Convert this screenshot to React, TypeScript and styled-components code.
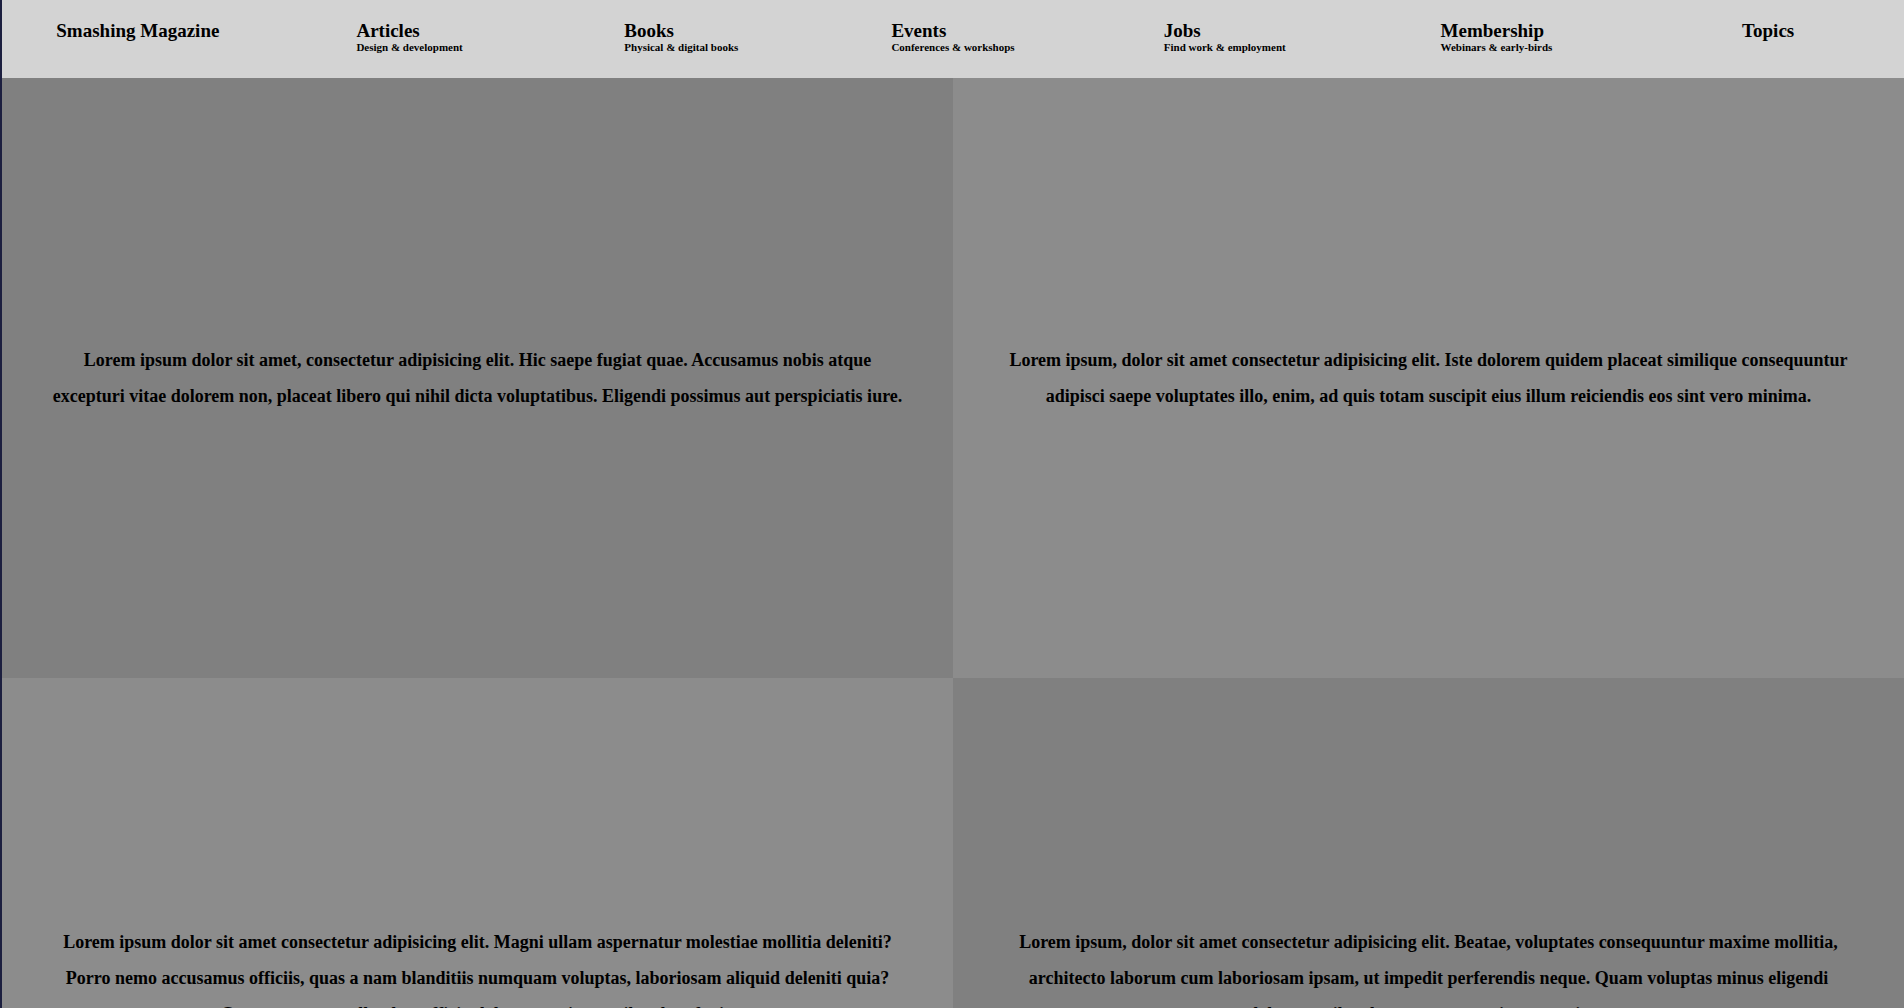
import React from 'react';
import styled, { createGlobalStyle } from 'styled-components';

const GlobalStyle = createGlobalStyle`
  html, body {
    margin: 0;
    padding: 0;
  }
  body {
    background-color: #1c1f3f;
    font-family: "Liberation Serif", "Times New Roman", serif;
    color: #000;
    overflow: hidden;
  }
`;

interface CellProps {
  dark?: boolean;
}

const Page = styled.div`
  margin-left: 2px;
  min-height: 100vh;
`;

const Header = styled.header`
  background-color: #d3d3d3;
  height: 78px;
  box-sizing: border-box;
  padding-top: 20px;
`;

const NavList = styled.ul`
  list-style: none;
  margin: 0;
  padding: 0;
  display: flex;
`;

const NavItem = styled.li`
  flex: 1;
  display: flex;
  justify-content: center;
`;

const NavLink = styled.a`
  display: flex;
  flex-direction: column;
  color: #000;
  text-decoration: none;
  cursor: pointer;
`;

const NavTitle = styled.span`
  font-size: 19px;
  font-weight: bold;
  line-height: 21px;
`;

const NavSub = styled.span`
  font-size: 11px;
  font-weight: bold;
  line-height: 13px;
`;

const Grid = styled.main`
  display: grid;
  grid-template-columns: 1fr 1fr;
  grid-auto-rows: 600px;
`;

const Cell = styled.section<CellProps>`
  background-color: ${({ dark }) => (dark ? '#808080' : '#8c8c8c')};
  display: flex;
  align-items: center;
  justify-content: center;
  padding: 0 50px;
  box-sizing: border-box;
`;

const Text = styled.p`
  margin: 0;
  text-align: center;
  font-weight: bold;
  font-size: 18px;
  line-height: 36px;
`;

const links = [
  { title: 'Smashing Magazine' },
  { title: 'Articles', sub: 'Design & development' },
  { title: 'Books', sub: 'Physical & digital books' },
  { title: 'Events', sub: 'Conferences & workshops' },
  { title: 'Jobs', sub: 'Find work & employment' },
  { title: 'Membership', sub: 'Webinars & early-birds' },
  { title: 'Topics' },
];

const cells = [
  {
    dark: true,
    text: 'Lorem ipsum dolor sit amet, consectetur adipisicing elit. Hic saepe fugiat quae. Accusamus nobis atque excepturi vitae dolorem non, placeat libero qui nihil dicta voluptatibus. Eligendi possimus aut perspiciatis iure.',
  },
  {
    dark: false,
    text: 'Lorem ipsum, dolor sit amet consectetur adipisicing elit. Iste dolorem quidem placeat similique consequuntur adipisci saepe voluptates illo, enim, ad quis totam suscipit eius illum reiciendis eos sint vero minima.',
  },
  {
    dark: false,
    text: 'Lorem ipsum dolor sit amet consectetur adipisicing elit. Magni ullam aspernatur molestiae mollitia deleniti? Porro nemo accusamus officiis, quas a nam blanditiis numquam voluptas, laboriosam aliquid deleniti quia? Consequatur repellendus, officia dolores nesciunt quibusdam fugit.',
  },
  {
    dark: true,
    text: 'Lorem ipsum, dolor sit amet consectetur adipisicing elit. Beatae, voluptates consequuntur maxime mollitia, architecto laborum cum laboriosam ipsam, ut impedit perferendis neque. Quam voluptas minus eligendi dolores, quibusdam nostrum sapiente aperiam.',
  },
];

const App = () => {
  return (
    <>
      <GlobalStyle />
      <Page>
        <Header>
          <nav>
            <NavList>
              {links.map((link) => (
                <NavItem key={link.title}>
                  <NavLink>
                    <NavTitle>{link.title}</NavTitle>
                    {link.sub && <NavSub>{link.sub}</NavSub>}
                  </NavLink>
                </NavItem>
              ))}
            </NavList>
          </nav>
        </Header>
        <Grid>
          {cells.map((cell, i) => (
            <Cell key={i} dark={cell.dark}>
              <Text>{cell.text}</Text>
            </Cell>
          ))}
        </Grid>
      </Page>
    </>
  );
};

export default App;
